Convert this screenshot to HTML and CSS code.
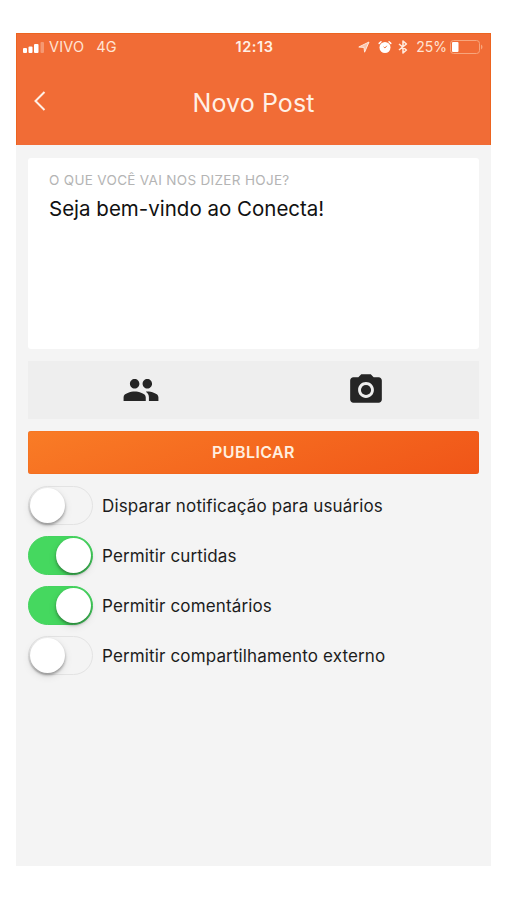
FILE: index.html
```
<!DOCTYPE html>
<html lang="pt-BR">
	<head>
		<meta charset="utf-8" />
		<title>Novo Post</title>
		<meta name="viewport" content="width=device-width" />
		<link rel="stylesheet" href="styles.css">
	</head>
	<body>

		<div class="phone">

			<header class="header">
				<div class="status">
					<div class="status-left">
						<svg class="signal" width="22" height="12" viewBox="0 0 22 12">
							<rect x="0" y="7" width="4" height="5" rx="1" />
							<rect x="5.5" y="5.5" width="4" height="6.500" rx="1" />
							<rect x="11" y="3" width="4.5" height="9" rx="1" />
							<rect x="17.5" y="1" width="3.5" height="11" rx="1" opacity="0.3" />
						</svg>
						<span class="carrier">VIVO</span>
						<span class="network">4G</span>
					</div>
					<span class="clock">12:13</span>
					<div class="status-right">
						<svg class="location" width="12" height="12" viewBox="0 0 12 12">
							<path d="M0.8 6L11 1L6.6 11.2L6 6.4Z" fill-opacity="0.6" stroke="#FFE9DC" stroke-width="1" stroke-linejoin="round" />
						</svg>
						<svg class="alarm" width="14" height="14" viewBox="0 0 14 14">
							<circle cx="7" cy="7.5" r="5.5" />
							<path d="M1.2 3.4L3 1.8M12.800 3.4L11 1.8" stroke="#FFF" stroke-width="1.5" stroke-linecap="round" />
							<path d="M5.600 6.800L7 8L8.800 5.800" fill="none" stroke="#F16C36" stroke-width="0.9" />
						</svg>
						<svg class="bluetooth" width="10" height="14" viewBox="0 0 10 14">
							<path d="M1 4L8.4 10L5 13V1L8.4 4L1 10" fill="none" stroke="#FFE9DC" stroke-width="1.6" stroke-linejoin="round" />
						</svg>
						<span class="percent">25%</span>
						<svg class="battery" width="33" height="14" viewBox="0 0 33 14">
							<rect x="0.5" y="0.5" width="29" height="13" rx="3" fill="none" stroke="#F7A57C" />
							<path d="M31 4.5C33 5.5 33 8.5 31 9.5Z" fill="#F7A57C" />
							<rect x="2" y="2" width="6.500" height="10" rx="1" />
						</svg>
					</div>
				</div>

				<div class="navbar">
					<button class="back" aria-label="Voltar">
						<svg width="12" height="20" viewBox="0 0 12 20">
							<path d="M10.5 1L1.5 10L10.5 19" fill="none" stroke="#FFF0E6" stroke-width="2" />
						</svg>
					</button>
					<h1 class="title">Novo Post</h1>
				</div>
			</header>

			<main class="content">
				<div class="message">
					<div class="message-label">O QUE VOCÊ VAI NOS DIZER HOJE?</div>
					<div class="message-text">Seja bem-vindo ao Conecta!</div>
				</div>

				<div class="actions">
					<button class="action" aria-label="Pessoas">
						<svg width="38" height="38" viewBox="0 0 24 24">
							<path d="M16 11c1.660 0 2.990-1.340 2.990-3S17.660 5 16 5s-3 1.340-3 3 1.340 3 3 3zm-8 0c1.660 0 2.990-1.340 2.990-3S9.660 5 8 5 5 6.340 5 8s1.340 3 3 3zm0 2c-2.330 0-7 1.170-7 3.500V19h14v-2.500c0-2.330-4.670-3.500-7-3.500zm8 0c-.29 0-.62.02-.97.05 1.160.84 1.970 1.970 1.970 3.450V19h6v-2.500c0-2.330-4.670-3.500-7-3.500z" />
						</svg>
					</button>
					<button class="action" aria-label="Foto">
						<svg width="38" height="38" viewBox="0 0 24 24">
							<circle cx="12" cy="12" r="3.200" />
							<path d="M9 2L7.170 4H4c-1.100 0-2 .9-2 2v12c0 1.100.9 2 2 2h16c1.100 0 2-.9 2-2V6c0-1.100-.9-2-2-2h-3.170L15 2H9zm3 15c-2.760 0-5-2.240-5-5s2.240-5 5-5 5 2.240 5 5-2.240 5-5 5z" />
						</svg>
					</button>
				</div>

				<button class="publish">PUBLICAR</button>

				<div class="options">
					<label class="option">
						<input type="checkbox" class="toggle" />
						<span>Disparar notificação para usuários</span>
					</label>
					<label class="option">
						<input type="checkbox" class="toggle" checked />
						<span>Permitir curtidas</span>
					</label>
					<label class="option">
						<input type="checkbox" class="toggle" checked />
						<span>Permitir comentários</span>
					</label>
					<label class="option">
						<input type="checkbox" class="toggle" />
						<span>Permitir compartilhamento externo</span>
					</label>
				</div>
			</main>

		</div>

	</body>
</html>
```
FILE: styles.css
```
* {
	margin: 0;
	padding: 0;
	box-sizing: border-box;
}

html, body {
	background: #FFF;
	height: 100%;
	font-family: Inter, "Liberation Sans", sans-serif;
}

button {
	border: none;
	background: none;
	font-family: inherit;
}

svg {
	display: block;
}

.phone {
	width: 475px;
	height: 866px;
	margin-left: 16px;
	padding-top: 33px;
	background: #F4F4F4 content-box;
}

.header {
	height: 112px;
	background: #F16C36;
	color: #FFF0E6;
	border: 1px solid #EC6420;
	border-bottom: none;
}

.status {
	display: grid;
	grid-template-columns: 1fr auto 1fr;
	align-items: center;
	height: 25px;
	padding: 0 7px 0 6px;
	font-size: 14px;
	color: #FFE4D4;
}

.status svg {
	fill: #FFF;
}

.status-left, .status-right {
	display: flex;
	align-items: center;
}

.status-right {
	justify-content: flex-end;
}

.carrier {
	margin-left: 4px;
	font-size: 14.5px;
	letter-spacing: 0.2px;
}

.network {
	margin-left: 12px;
	font-size: 14.5px;
}

.clock {
	margin-left: 3px;
	font-size: 14.5px;
	font-weight: 600;
	letter-spacing: 0.6px;
	color: #FFF0E6;
}

.alarm {
	margin-left: 8px;
}

.bluetooth {
	margin-left: 6px;
}

.percent {
	margin: 0 3px 0 8px;
}

.navbar {
	display: grid;
	grid-template-columns: 46px 1fr 46px;
	align-items: center;
	height: 87px;
}

.back {
	padding: 0 0 4px 17px;
}

.title {
	font-size: 25px;
	font-weight: 400;
	letter-spacing: 0.1px;
	text-align: center;
}

.content {
	padding: 13px 12px 0;
}

.message {
	height: 191px;
	padding: 14px 21px;
	background: #FFF;
	border-radius: 3px;
}

.message-label {
	font-size: 13.5px;
	line-height: 16px;
	letter-spacing: 0.32px;
	color: #B4B4B4;
	white-space: nowrap;
}

.message-text {
	margin-top: 7px;
	font-size: 20.5px;
	line-height: 28px;
	color: #111;
	white-space: nowrap;
}

.actions {
	display: flex;
	height: 58px;
	margin-top: 12px;
	background: #EEE;
}

.action {
	display: flex;
	flex: 1;
	align-items: center;
	justify-content: center;
	fill: #252525;
}

.publish {
	display: block;
	width: 100%;
	height: 43px;
	margin-top: 12px;
	padding-bottom: 1px;
	border-radius: 3px;
	background: linear-gradient(160deg, #F97C26, #F05518);
	box-shadow: inset 0 0 1px #D9500F;
	color: #FFEEDF;
	font-size: 16px;
	font-weight: 600;
	letter-spacing: 0.4px;
}

.options {
	margin-top: 6px;
}

.option {
	display: flex;
	align-items: center;
	height: 50px;
	font-size: 17px;
	letter-spacing: 0.14px;
	color: #1C1C1C;
	white-space: nowrap;
}

.option span {
	padding-top: 2px;
}

.toggle {
	appearance: none;
	width: 65px;
	height: 39px;
	margin-right: 9px;
	padding: 1px;
	border: 1px solid #E3E3E3;
	border-radius: 20px;
	background: #F4F4F4;
}

.toggle:before {
	content: "";
	display: block;
	width: 35px;
	height: 35px;
	border-radius: 50%;
	background: #FFF;
	box-shadow: 0 2px 3px rgba(0, 0, 0, 0.35), 0 3px 8px rgba(0, 0, 0, 0.1);
}

.toggle:checked {
	border-color: #45D35F;
	background: #45D85F;
}

.toggle:checked:before {
	margin-left: 26px;
}
```
